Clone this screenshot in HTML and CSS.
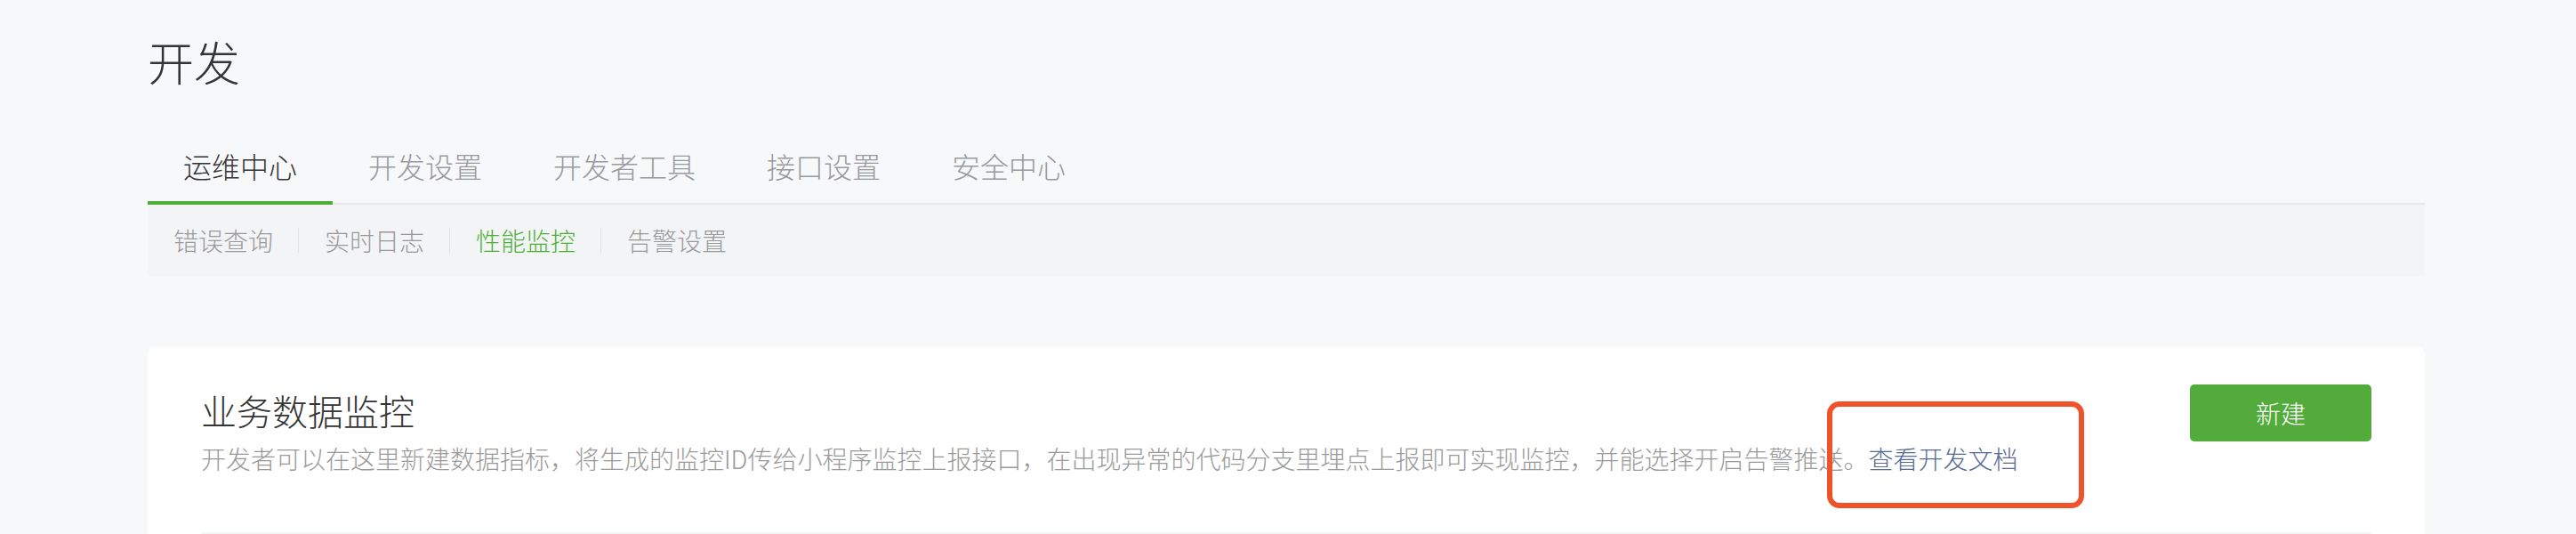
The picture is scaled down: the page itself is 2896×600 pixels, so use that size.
FILE: index.html
```html
<!DOCTYPE html>
<html lang="zh-CN">
<head>
<meta charset="utf-8">
<title>开发</title>
<link rel="stylesheet" href="styles.css">
</head>
<body>
<div class="page">
  <h1 class="page-title">开发</h1>
  <nav class="tabs">
    <a class="tab active">运维中心</a>
    <a class="tab">开发设置</a>
    <a class="tab">开发者工具</a>
    <a class="tab">接口设置</a>
    <a class="tab">安全中心</a>
  </nav>
  <div class="subtabs">
    <a class="subtab">错误查询</a>
    <a class="subtab">实时日志</a>
    <a class="subtab current">性能监控</a>
    <a class="subtab">告警设置</a>
  </div>
  <section class="card">
    <div class="card-head">
      <div class="card-info">
        <h2 class="card-title">业务数据监控</h2>
        <p class="card-desc">开发者可以在这里新建数据指标，将生成的监控ID传给小程序监控上报接口，在出现异常的代码分支里埋点上报即可实现监控，并能选择开启告警推送。<a class="doc-link">查看开发文档</a></p>
      </div>
      <button class="btn-primary">新建</button>
    </div>
    <div class="table-head"></div>
    <div class="annotation"></div>
  </section>
</div>
</body>
</html>
```
FILE: styles.css
```css
html, body {
  margin: 0;
  padding: 0;
  background: #f7f8fa;
}
body {
  font-family: "Noto Sans CJK SC", "Noto Sans", sans-serif;
  color: #353535;
  font-weight: 300;
}
.page {
  width: 2560px;
  margin-left: 166px;
  padding-top: 43px;
}
.page-title {
  margin: 0;
  font-size: 52px;
  line-height: 52px;
  font-weight: 300;
  color: #353535;
}
.tabs {
  display: flex;
  margin-top: 75px;
  box-shadow: inset 0 -2px 0 #e7e8ea;
}
.tab {
  padding: 0 40px 24px;
  font-size: 32px;
  line-height: 32px;
  color: #9a9a9a;
  border-bottom: 4px solid transparent;
}
.tab.active {
  color: #353535;
  border-bottom-color: #4caf37;
}
.subtabs {
  display: flex;
  align-items: center;
  height: 80px;
  background: #f3f4f6;
}
.subtab {
  padding: 0 28px 0 29px;
  font-size: 28px;
  line-height: 28px;
  color: #9a9a9a;
  border-left: 1px solid #e2e3e5;
}
.subtab:first-child {
  border-left: 0;
}
.subtab.current {
  color: #4caf37;
}
.card {
  position: relative;
  margin-top: 80px;
  background: #fff;
  border-radius: 8px;
  padding: 0 60px;
  height: 400px;
}
.card-head {
  display: flex;
  justify-content: space-between;
  align-items: flex-start;
}
.card-info {
  padding-top: 51px;
}
.card-title {
  margin: 0;
  font-size: 40px;
  line-height: 40px;
  font-weight: 300;
  color: #353535;
}
.card-desc {
  margin: 20px 0 0;
  font-size: 28px;
  line-height: 28px;
  color: #9a9a9a;
}
.doc-link {
  color: #576b95;
}
.btn-primary {
  margin-top: 42px;
  width: 204px;
  height: 64px;
  border: 0;
  border-radius: 5px;
  background: #52ab3a;
  color: #fff;
  font-family: inherit;
  font-weight: 300;
  font-size: 28px;
  padding: 0;
}
.table-head {
  margin-top: 69px;
  height: 80px;
  background: #f4f5f7;
}
.annotation {
  position: absolute;
  left: 1888px;
  top: 61px;
  width: 289px;
  height: 120px;
  box-sizing: border-box;
  border: 6px solid #f0522a;
  border-radius: 14px;
}
```
